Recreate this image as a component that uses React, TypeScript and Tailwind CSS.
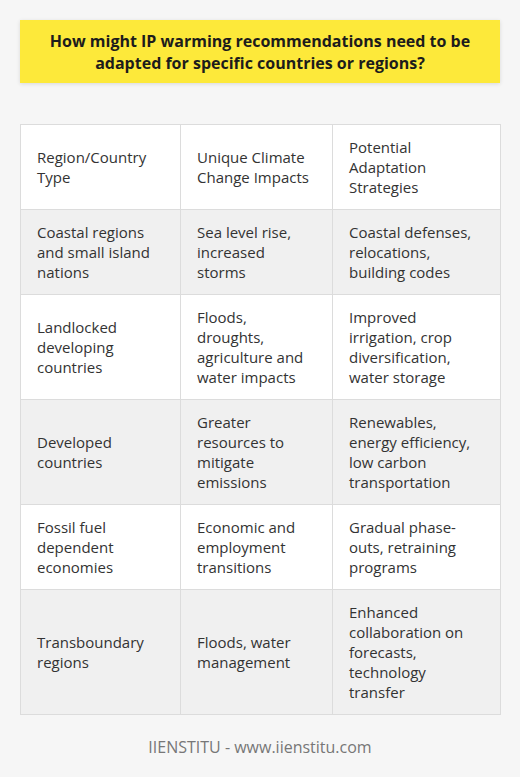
const rows = [
  ["Coastal regions and small island nations", "Sea level rise, increased storms", "Coastal defenses, relocations, building codes"],
  ["Landlocked developing countries", "Floods, droughts, agriculture and water impacts", "Improved irrigation, crop diversification, water storage"],
  ["Developed countries", "Greater resources to mitigate emissions", "Renewables, energy efficiency, low carbon transportation"],
  ["Fossil fuel dependent economies", "Economic and employment transitions", "Gradual phase-outs, retraining programs"],
  ["Transboundary regions", "Floods, water management", "Enhanced collaboration on forecasts, technology transfer"],
];

export default function App() {
  return (
    <div
      className="w-[520px] h-[777px] bg-[#f6f6f6] px-5 pt-5 text-[#333]"
      style={{ fontFamily: '"Open Sans", "Noto Sans", sans-serif' }}
    >
      {/* TITLE */}
      <div className="bg-[#fde93a] h-[63px] flex items-center justify-center px-4 shadow-[0_1px_4px_rgba(0,0,0,0.12)]">
        <h1 className="text-center text-[16px] leading-[22px] font-bold text-[#1c1c1c]">
          How might IP warming recommendations need to be adapted for specific countries or regions?
        </h1>
      </div>

      {/* TABLE */}
      <table className="mt-[41px] w-[480px] table-fixed border-collapse text-[15px] leading-[20px]">
        <colgroup>
          <col className="w-[160px]" />
          <col className="w-[152px]" />
          <col className="w-[168px]" />
        </colgroup>
        <thead>
          <tr className="bg-white h-[85px]">
            <th className="border border-[#dcdcdc] px-4 py-3 text-left font-normal align-middle">Region/Country Type</th>
            <th className="border border-[#dcdcdc] px-4 py-3 text-left font-normal align-middle">Unique Climate Change Impacts</th>
            <th className="border border-[#dcdcdc] px-4 py-3 text-left font-normal align-middle">Potential Adaptation Strategies</th>
          </tr>
        </thead>
        <tbody>
          {rows.map((r, i) => (
            <tr key={i} className={i % 2 === 0 ? "bg-[#f0f0f0]" : "bg-white"}>
              {r.map((c, j) => (
                <td key={j} className="border border-[#dcdcdc] px-4 py-3 align-middle">
                  {c}
                </td>
              ))}
            </tr>
          ))}
        </tbody>
      </table>

      {/* FOOTER */}
      <p className="mt-[21px] text-center text-[16px] leading-[22px] text-[#777]">
        IIENSTITU - www.iienstitu.com
      </p>
    </div>
  );
}
